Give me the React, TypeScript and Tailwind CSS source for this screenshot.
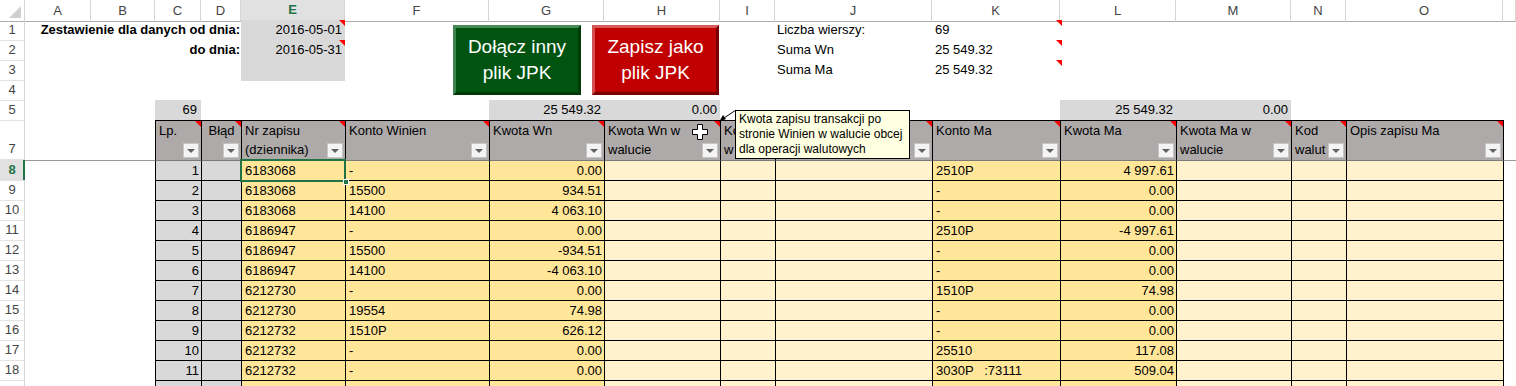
import React from "react";

const COLS =
  "grid grid-cols-[25px_66px_64px_46px_40px_104px_144px_115px_116px_55px_157px_128px_116px_115px_55px_157px_1fr]";

const Tri = () => (
  <span className="absolute right-0 top-0 w-0 h-0 border-l-[6px] border-l-transparent border-t-[6px] border-t-[#ff0000]" />
);

const Filter = () => (
  <span className="absolute right-[2px] bottom-[2px] w-[16px] h-[15px] bg-[#f4f4f4] border border-[#c6c6c6] flex items-center justify-center">
    <span className="w-0 h-0 border-l-[4px] border-r-[4px] border-t-[4px] border-l-transparent border-r-transparent border-t-[#606060]" />
  </span>
);

function RH({ n, sel, tall }: { n?: number | string; sel?: boolean; tall?: boolean }) {
  return (
    <div
      className={
        "relative border-r border-r-[#d4d4d4] border-b border-b-[#e3e3e3] flex justify-center " +
        (tall ? "items-end leading-[20px] " : "items-center ") +
        (sel ? "bg-[#e1e1e1] text-[#217346] font-bold" : "text-[#444]")
      }
    >
      {n}
      {sel && <span className="absolute right-[-1px] top-0 bottom-0 w-[2px] bg-[#217346]" />}
    </div>
  );
}

const letters = ["A", "B", "C", "D", "E", "F", "G", "H", "I", "J", "K", "L", "M", "N", "O", ""];

const headers: { t: string[]; c?: boolean }[] = [
  { t: ["Lp."] },
  { t: ["Błąd"], c: true },
  { t: ["Nr zapisu", "(dziennika)"] },
  { t: ["Konto Winien"] },
  { t: ["Kwota Wn"] },
  { t: ["Kwota Wn w", "walucie"] },
  { t: ["Ko", "w"] },
  { t: [] },
  { t: ["Konto Ma"] },
  { t: ["Kwota Ma"] },
  { t: ["Kwota Ma w", "walucie"] },
  { t: ["Kod", "walut"] },
  { t: ["Opis zapisu Ma"] },
];

const data: (string | number)[][] = [
  [1, "6183068", "-", "0.00", "2510P", "4 997.61"],
  [2, "6183068", "15500", "934.51", "-", "0.00"],
  [3, "6183068", "14100", "4 063.10", "-", "0.00"],
  [4, "6186947", "-", "0.00", "2510P", "-4 997.61"],
  [5, "6186947", "15500", "-934.51", "-", "0.00"],
  [6, "6186947", "14100", "-4 063.10", "-", "0.00"],
  [7, "6212730", "-", "0.00", "1510P", "74.98"],
  [8, "6212730", "19554", "74.98", "-", "0.00"],
  [9, "6212732", "1510P", "626.12", "-", "0.00"],
  [10, "6212732", "-", "0.00", "25510", "117.08"],
  [11, "6212732", "-", "0.00", "3030P   :73111", "509.04"],
  ["", "", "", "", "", ""],
];

const cellBase = "overflow-hidden whitespace-pre leading-[19px] border-l border-t border-black";

function DataRow({ row, idx }: { row: (string | number)[]; idx: number }) {
  const first = idx === 0;
  const top = first ? " border-t-[#7a7a7a]" : "";
  const n = idx + 8;
  return (
    <div className={COLS + " h-[20px]"}>
      <RH n={n <= 18 ? n : ""} sel={first} />
      <div className={first ? "border-t border-[#9a9a9a]" : ""} />
      <div className={first ? "border-t border-[#9a9a9a]" : ""} />
      <div className={cellBase + top + " bg-[#d9d9d9] text-right pr-[2px]"}>{row[0]}</div>
      <div className={cellBase + top + " bg-[#d9d9d9]"} />
      <div className={cellBase + top + " bg-[#ffe699] pl-[3px] " + (first ? "relative z-10 overflow-visible" : "")}>
        {row[1]}
        {first && (
          <>
            <span className="absolute left-[-2px] top-[-2px] right-[-1px] bottom-[-1px] border-2 border-[#217346]" />
            <span className="absolute right-[-4px] bottom-[-4px] w-[6px] h-[6px] bg-[#217346] border border-white" />
          </>
        )}
      </div>
      <div className={cellBase + top + " bg-[#ffe699] pl-[3px]"}>{row[2]}</div>
      <div className={cellBase + top + " bg-[#ffe699] text-right pr-[2px]"}>{row[3]}</div>
      <div className={cellBase + top + " bg-[#fff2cc]"} />
      <div className={cellBase + top + " bg-[#fff2cc]"} />
      <div className={cellBase + top + " bg-[#fff2cc]"} />
      <div className={cellBase + top + " bg-[#ffe699] pl-[3px]"}>{row[4]}</div>
      <div className={cellBase + top + " bg-[#ffe699] text-right pr-[2px]"}>{row[5]}</div>
      <div className={cellBase + top + " bg-[#fff2cc]"} />
      <div className={cellBase + top + " bg-[#fff2cc]"} />
      <div className={cellBase + top + " bg-[#fff2cc]"} />
      <div className={"border-l border-black " + (first ? "border-t border-t-[#9a9a9a]" : "")} />
    </div>
  );
}

export default function App() {
  return (
    <div className="relative w-[1516px] h-[386px] overflow-hidden bg-white text-black text-[13px] font-['Liberation_Sans',Arial,sans-serif]">
      {/* column headers */}
      <div className={COLS + " h-[20px]"}>
        <div className="relative border-r border-r-[#d4d4d4] border-b border-b-[#ababab]">
          <span className="absolute right-[3px] bottom-[3px] w-0 h-0 border-l-[12px] border-l-transparent border-b-[12px] border-b-[#d0d0d0]" />
        </div>
        {letters.map((l, i) =>
          l === "E" ? (
            <div
              key={i}
              className="flex items-center justify-center bg-[#e1e1e1] text-[#217346] font-bold border-r border-r-[#d4d4d4] border-b-2 border-b-[#217346]"
            >
              {l}
            </div>
          ) : (
            <div
              key={i}
              className="flex items-center justify-center text-[#444] border-r border-r-[#d4d4d4] border-b border-b-[#ababab]"
            >
              {l}
            </div>
          )
        )}
      </div>

      {/* row 1 */}
      <div className={COLS + " h-[20px]"}>
        <RH n={1} />
        <div className="col-span-4 text-right font-bold pr-[1px] leading-[20px] whitespace-nowrap">
          Zestawienie dla danych od dnia:
        </div>
        <div className="relative bg-[#d9d9d9] text-right pr-[3px] leading-[20px]">
          2016-05-01
          <Tri />
        </div>
        <div />
        <div />
        <div />
        <div />
        <div className="pl-[2px] leading-[20px] whitespace-nowrap">Liczba wierszy:</div>
        <div className="relative pl-[3px] leading-[20px]">
          69
          <span className="absolute right-[-2px] top-0 w-0 h-0 border-l-[6px] border-l-transparent border-t-[6px] border-t-[#ff0000]" />
        </div>
        <div />
        <div />
        <div />
        <div />
        <div />
      </div>

      {/* row 2 */}
      <div className={COLS + " h-[20px]"}>
        <RH n={2} />
        <div className="col-span-4 text-right font-bold pr-[1px] leading-[20px] whitespace-nowrap">do dnia:</div>
        <div className="relative bg-[#d9d9d9] text-right pr-[3px] leading-[20px]">
          2016-05-31
          <Tri />
        </div>
        <div />
        <div />
        <div />
        <div />
        <div className="pl-[2px] leading-[20px] whitespace-nowrap">Suma Wn</div>
        <div className="relative pl-[3px] leading-[20px]">
          25 549.32
          <span className="absolute right-[-2px] top-0 w-0 h-0 border-l-[6px] border-l-transparent border-t-[6px] border-t-[#ff0000]" />
        </div>
        <div />
        <div />
        <div />
        <div />
        <div />
      </div>

      {/* row 3 */}
      <div className={COLS + " h-[20px]"}>
        <RH n={3} />
        <div className="col-span-4" />
        <div className="bg-[#d9d9d9]" />
        <div />
        <div />
        <div />
        <div />
        <div className="pl-[2px] leading-[20px] whitespace-nowrap">Suma Ma</div>
        <div className="relative pl-[3px] leading-[20px]">
          25 549.32
          <span className="absolute right-[-2px] top-0 w-0 h-0 border-l-[6px] border-l-transparent border-t-[6px] border-t-[#ff0000]" />
        </div>
        <div />
        <div />
        <div />
        <div />
        <div />
      </div>

      {/* row 4 */}
      <div className={COLS + " h-[20px]"}>
        <RH n={4} />
      </div>

      {/* row 5 */}
      <div className={COLS + " h-[20px]"}>
        <RH n={5} />
        <div />
        <div />
        <div className="bg-[#d9d9d9] text-right pr-[4px] leading-[20px]">69</div>
        <div />
        <div />
        <div />
        <div className="bg-[#d9d9d9] text-right pr-[3px] leading-[20px]">25 549.32</div>
        <div className="bg-[#d9d9d9] text-right pr-[3px] leading-[20px]">0.00</div>
        <div />
        <div />
        <div />
        <div className="bg-[#d9d9d9] text-right pr-[3px] leading-[20px]">25 549.32</div>
        <div className="bg-[#d9d9d9] text-right pr-[3px] leading-[20px]">0.00</div>
        <div />
        <div />
        <div />
      </div>

      {/* row 7 header */}
      <div className={COLS + " h-[40px]"}>
        <RH n={7} tall />
        <div />
        <div />
        {headers.map((h, i) => (
          <div
            key={i}
            className={
              "relative overflow-hidden bg-[#aeaaaa] border-l border-t border-black px-[3px] leading-[19px] whitespace-nowrap " +
              (h.c ? "text-center" : "")
            }
          >
            {h.t.map((line, j) => (
              <div key={j}>{line}</div>
            ))}
            <Tri />
            <Filter />
          </div>
        ))}
        <div className="border-l border-black" />
      </div>

      {data.map((r, i) => (
        <DataRow key={i} row={r} idx={i} />
      ))}

      {/* buttons (shapes floating over the sheet) */}
      <div className="absolute left-[453px] top-[25px] w-[128px] h-[70px] bg-[#01540f] border-[3px] border-t-[#4a8a56] border-l-[#3f8350] border-r-[#003a09] border-b-[#003a09] flex flex-col items-center justify-center text-white text-[19px] leading-[26px]">
        <span>Dołącz inny</span>
        <span>plik JPK</span>
      </div>
      <div className="absolute left-[592px] top-[25px] w-[127px] h-[70px] bg-[#c00000] border-[3px] border-t-[#d65a5a] border-l-[#d25050] border-r-[#780000] border-b-[#780000] flex flex-col items-center justify-center text-white text-[19px] leading-[26px]">
        <span>Zapisz jako</span>
        <span>plik JPK</span>
      </div>

      {/* comment tooltip */}
      <svg className="absolute left-[714px] top-[104px]" width="26" height="22" viewBox="0 0 26 22">
        <line x1="7" y1="16" x2="22" y2="6" stroke="#000" strokeWidth="1" />
        <polygon points="5,18 12,15 9,11" fill="#000" />
      </svg>
      <div className="absolute left-[735px] top-[110px] w-[175px] h-[49px] bg-[#ffffe1] border border-black px-[3px] pt-[1px] text-[12px] leading-[15px] whitespace-nowrap z-20">
        <div>Kwota zapisu transakcji po</div>
        <div>stronie Winien w walucie obcej</div>
        <div>dla operacji walutowych</div>
      </div>

      {/* cursor */}
      <svg className="absolute left-[692px] top-[124px] z-30" width="16" height="16" viewBox="0 0 16 16">
        <path
          d="M5.5 0.5 H10.5 V5.5 H15.5 V10.5 H10.5 V15.5 H5.5 V10.5 H0.5 V5.5 H5.5 Z"
          fill="#fff"
          stroke="#000"
          strokeWidth="1"
        />
      </svg>
    </div>
  );
}
